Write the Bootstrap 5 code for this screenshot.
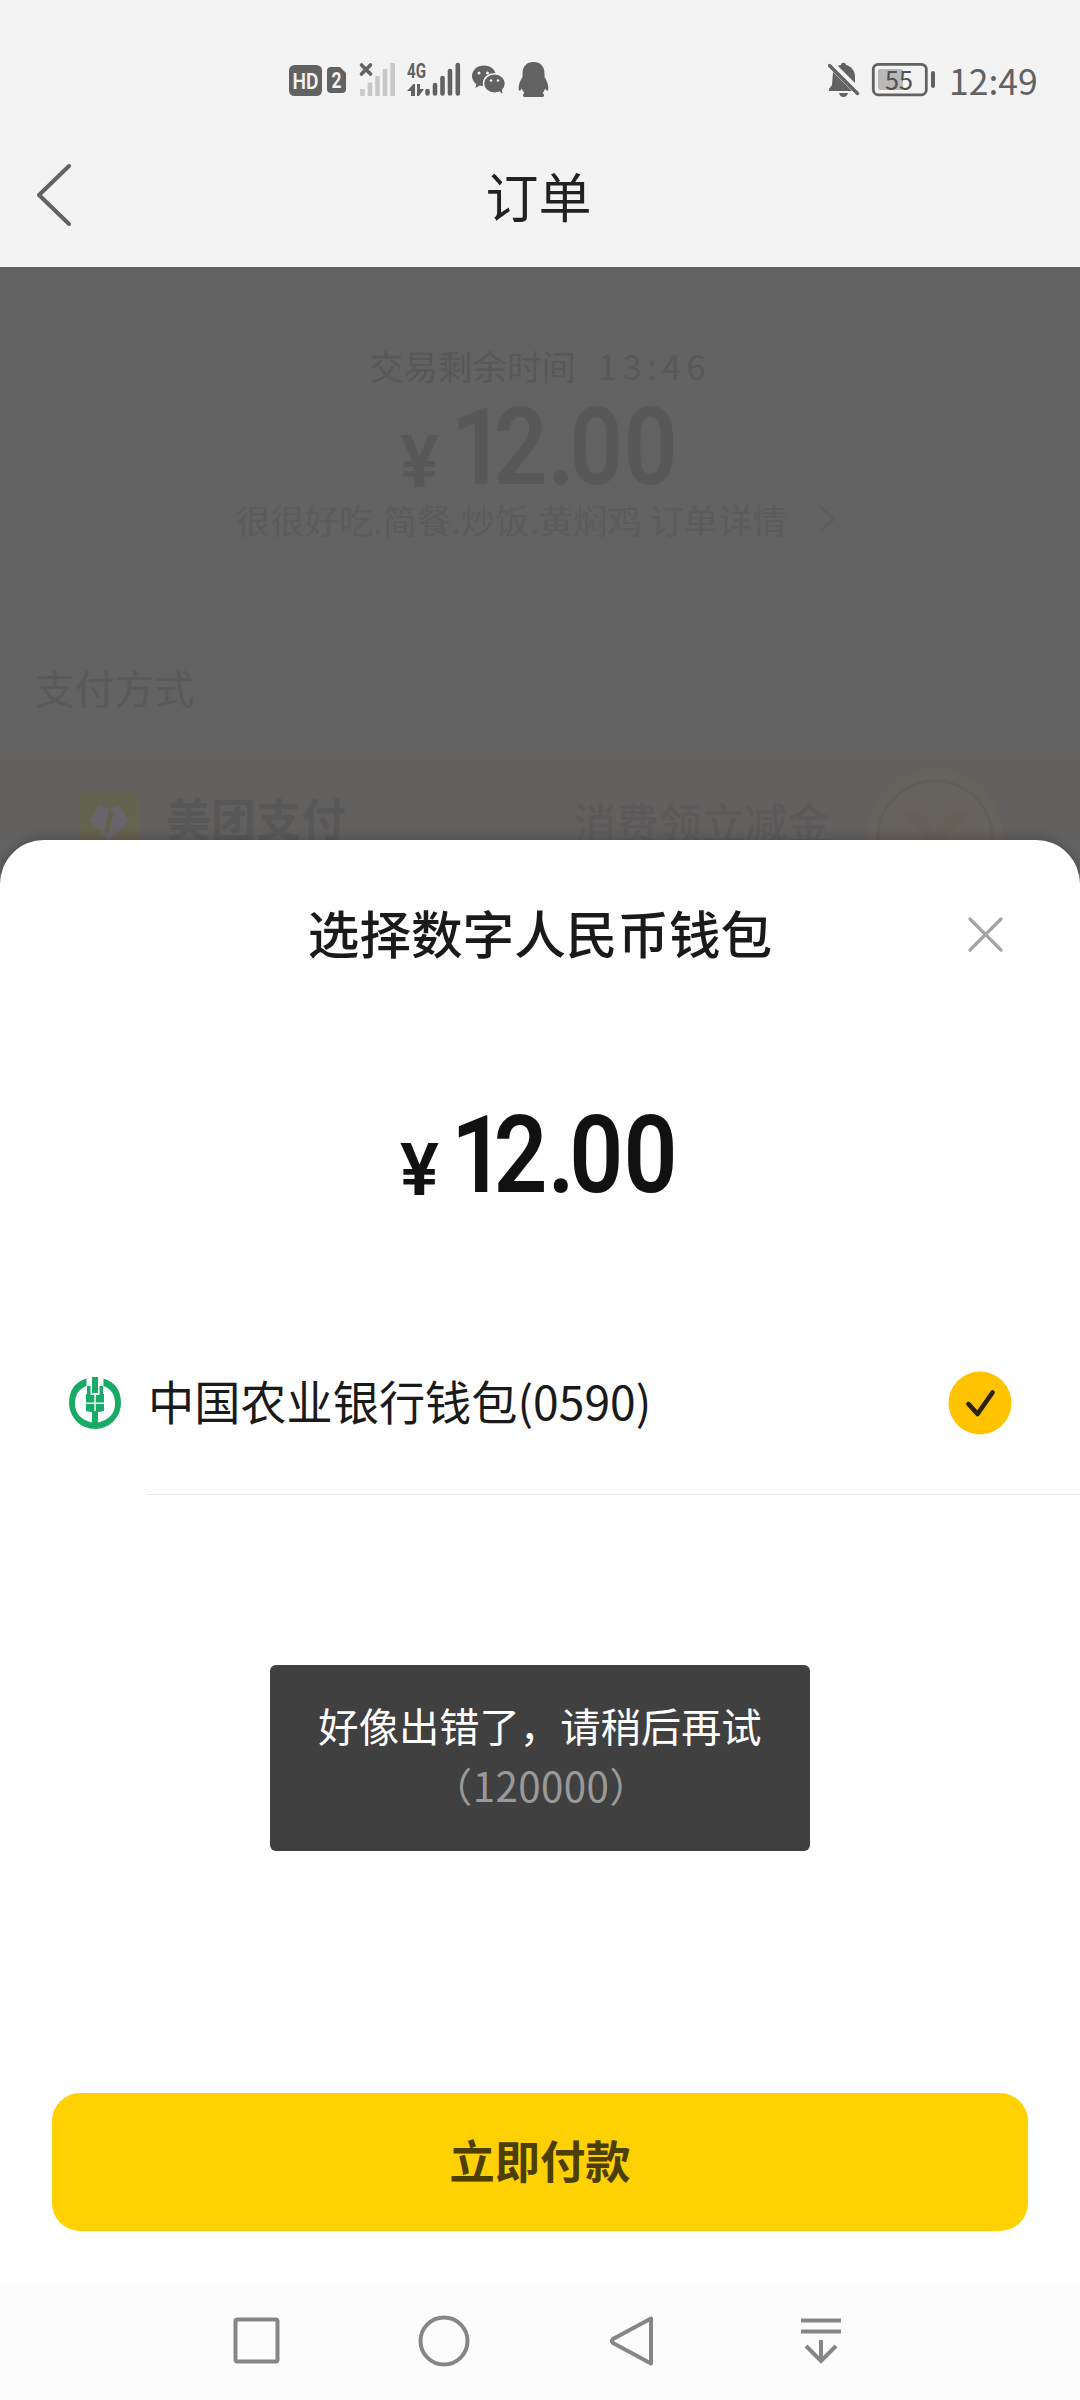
<!DOCTYPE html>
<html lang="zh-CN">
<head>
<meta charset="utf-8">
<meta name="viewport" content="width=device-width, initial-scale=1">
<title>订单</title>
<link href="https://cdn.jsdelivr.net/npm/bootstrap@5.3.0/dist/css/bootstrap.min.css" rel="stylesheet">
<style>
body{font-family:"Noto Sans CJK SC",sans-serif;background:#626262;color:#1a1a1a}
.screen{width:1080px;height:2400px;overflow:hidden}
.topbar{background:#f3f3f3;height:267px;flex:none}
.status{height:160px;padding:0 43px 0 289px}
.clock{font-size:35.5px;line-height:40px;color:#626262;width:88px;white-space:nowrap;margin-left:13px}
.titlebar{height:70px;padding-left:37px;padding-right:74px}
.titlebar h1{font-size:53px;line-height:68px;font-weight:400;color:#222}
.dimmed{height:573px;flex:none;background:linear-gradient(180deg,#626262 80%,#62605e 92%);color:#585858;padding-top:78px;overflow:hidden}
.timeline{font-size:34.5px;line-height:40px}
.timeline span{letter-spacing:5.4px;margin-left:22px}
.money{width:280px;height:84px;line-height:86px;font-family:Roboto,sans-serif;font-weight:600;margin-left:auto;margin-right:auto}
.money .yen{font-size:73px;width:51px;flex:none;padding-top:14px;height:84px}
.money .num{font-size:107px;transform:scaleX(.885);transform-origin:0 50%;white-space:nowrap}
.money .lead-digit{letter-spacing:-13px}
.money .dot{letter-spacing:-6px}
.orderline{font-size:34.3px;line-height:40px;margin-top:10px;padding-left:236px;color:#5b5b5b;white-space:pre}
.methods{font-size:39.8px;line-height:44px;margin-top:126px;padding-left:35px;color:#595959}
.payrow{height:60px;margin-top:83px;padding-left:79px}
.payrow b{font-size:45px;line-height:50px;margin-left:26px;margin-bottom:8px}
.payrow .promo{font-size:42.9px;line-height:46px;margin-left:227px;margin-bottom:3px;color:#5b5959;font-weight:500;white-space:nowrap}
.sheet{background:#fff;border-radius:44px 44px 0 0;padding-top:61px;box-shadow:0 0 12px rgba(0,0,0,.25)}
.under{background:#626262}
.sheethead{height:60px}
.sheethead h2{font-size:51.6px;line-height:60px;font-weight:500;padding-top:1px}
.closer{right:74px;top:13px}
.wallet{height:64px;margin-top:174px;padding:0 68px 0 69px}
.wallet .name{font-size:46.2px;line-height:56px;margin:-7px 0 0 27px}
.divide{height:1px;background:#e8e8e8;margin:59px 0 0 147px}
.toastbox{left:270px;top:1665px;width:540px;height:186px;border-radius:6px;background:#404040;color:#fff;font-size:40.3px;line-height:60px;padding-top:30px}
.toastbox .code{color:#999;letter-spacing:.4px;padding-left:2px}
.paybtn{--bs-btn-bg:#ffd103;--bs-btn-color:#4d3f00;background:#ffd103;color:#4d3f00;border:0;border-radius:28px;height:138px;margin:0 52px 52px;font-size:45.3px;font-weight:700;padding:0 0 5px}
.navkeys{height:117px;background:#fcfcfc}
</style>
<script src="https://cdn.jsdelivr.net/npm/bootstrap@5.3.0/dist/js/bootstrap.bundle.min.js"></script>
</head>
<body>
<div class="screen d-flex flex-column position-relative">
  <header class="topbar">
    <div class="status d-flex align-items-center justify-content-between">
      <svg width="262" height="40" viewBox="289 60 262 40" fill="#626262">
        <rect x="289" y="65" width="33" height="31" rx="5.5"/>
        <text x="305.500" y="88.500" font-family="Roboto" font-weight="600" font-size="22" text-anchor="middle" textLength="26" lengthAdjust="spacingAndGlyphs" fill="#f3f3f3">HD</text>
        <path d="M331 67h9l6 6v16q0 4-4 4h-11q-4 0-4-4V71q0-4 4-4z"/>
        <text x="336.500" y="88" font-family="Roboto" font-weight="700" font-size="22" text-anchor="middle" textLength="10" lengthAdjust="spacingAndGlyphs" fill="#f3f3f3">2</text>
        <path d="M361.500 65l9 9m0-9l-9 9" stroke="#626262" stroke-width="3.600" stroke-linecap="round"/>
        <g stroke="#c8c8c8" stroke-width="4.600"><path d="M362.500 89v7M370 82.500V96M377.500 76V96M385 69V96M392.700 63V96"/></g>
        <text x="407" y="77.500" font-family="Roboto" font-weight="700" font-size="20" textLength="19" lengthAdjust="spacingAndGlyphs">4G</text>
        <path d="M407 91l6.500-7H415v12h-4v-5zM417 84h3v5h4l-5 7h-2z"/>
        <g stroke="#626262" stroke-width="4.600" stroke-linecap="round"><path d="M427.500 91v2.500M435 85v8.500M442.500 78v15.500M450 71v22.500M457.800 65v28.500"/></g>
        <path d="M484 65.500c-7 0-12 4.700-12 10.500 0 3.400 1.700 6 4.300 8l-1 4 4.500-2.400q2 .6 4.200.6c7 0 12-4.500 12-10.200s-5-10.500-12-10.500z"/>
        <ellipse cx="494.500" cy="83.500" rx="11" ry="9.700" stroke="#f3f3f3" stroke-width="1.500"/><path d="M498 90l4.500 4-.8-6z"/>
        <g fill="#f3f3f3"><circle cx="479" cy="73" r="1.500"/><circle cx="487.500" cy="73" r="1.500"/><circle cx="491" cy="80.500" r="1.300"/><circle cx="498" cy="80.500" r="1.300"/></g>
        <path d="M533.500 62c-7 0-11 4.500-11 11.500v3.500c-3 4.500-4.500 10-3.500 13.500 1 .6 2-.5 3-2 .5 2 1.500 3.500 2.500 4.500-2 1-2 4 0 4h18c2 0 2-3 0-4 1-1 2-2.500 2.500-4.500 1 1.500 2 2.600 3 2 1-3.500-.5-9-3.500-13.500v-3.500c0-7-4-11.500-11-11.500z"/>
      </svg>
      <div class="d-flex align-items-center">
        <svg width="108" height="40" viewBox="828 60 108 40" fill="#626262">
          <path d="M833 72l19 19h-23v-2l3-4zM838 66c1-1 2-1 3-1 0-3 5-3 5 0 5 1 9 6 9 11v7zM839 93h9q-1 4-4.500 4t-4.500-4z"/>
          <path d="M829.500 65.500L857.500 93.500" stroke="#626262" stroke-width="3.400" stroke-linecap="round"/>
          <rect x="873.300" y="64.300" width="53" height="30.500" rx="5" fill="none" stroke="#626262" stroke-width="2.800"/>
          <rect x="878" y="69" width="25" height="21" rx="2" fill="#b9b9b9"/>
          <rect x="931" y="71" width="4" height="17" rx="2"/>
          <text x="899" y="89.500" font-family="Noto Sans CJK SC" font-size="26" text-anchor="middle" textLength="28" lengthAdjust="spacingAndGlyphs" fill="#505050">55</text>
        </svg>
        <span class="clock">12:49</span>
      </div>
    </div>
    <div class="titlebar d-flex align-items-center justify-content-between">
      <svg width="34" height="62" viewBox="0 0 34 62" fill="none" stroke="#626262" stroke-width="4" stroke-linecap="round" stroke-linejoin="round"><path d="M32 2L2 31L32 60"/></svg>
      <h1 class="m-0">订单</h1><span></span>
    </div>
  </header>

  <section class="dimmed">
    <div class="timeline text-center">交易剩余时间<span>13:46</span></div>
    <div class="money d-flex" style="margin-top:20px"><span class="yen">¥</span><span class="num"><span class="lead-digit">1</span>2<span class="dot">.</span>00</span></div>
    <div class="orderline d-flex align-items-center"><span>很很好吃.简餐.炒饭.黄焖鸡 订单详情</span><svg class="ms-4" width="28" height="26" viewBox="0 0 28 26" fill="none" stroke="#5b5b5b" stroke-width="2"><path d="M9 1l14 12L9 25"/></svg></div>
    <div class="methods">支付方式</div>
    <div class="payrow d-flex align-items-center">
      <svg width="61" height="60" viewBox="0 0 61 60"><rect width="61" height="60" rx="8" fill="#64634f"/><path d="M10 28L21 13q9 7 18 0l11 15-20 21z" fill="#67656a"/><path d="M30 18l5 2-5 20h-5z" fill="#62614e"/></svg>
      <b>美团支付</b><span class="promo">消费领立减金</span>
      <svg class="flex-shrink-0" style="margin-left:32px" width="146" height="112" viewBox="0 0 146 112"><circle cx="73" cy="70" r="68" fill="#64625a"/><circle cx="73" cy="72" r="57" fill="#64625a" stroke="#5f5d56" stroke-width="2.500"/><path d="M40 46h17l16 18 16-18h17L80 76v34H66V76z" fill="#655f58"/></svg>
    </div>
  </section>

  <div class="under d-flex flex-column flex-grow-1">
  <main class="sheet d-flex flex-column flex-grow-1 position-relative">
    <div class="sheethead text-center position-relative">
      <h2 class="mb-0">选择数字人民币钱包</h2>
      <svg class="closer position-absolute" width="40" height="40" viewBox="0 0 40 40" stroke="#a5a5a5" stroke-width="3.200" stroke-linecap="round"><path d="M4 5L35 36M35 5L4 36"/></svg>
    </div>
    <div class="money d-flex" style="margin-top:152px;color:#111"><span class="yen">¥</span><span class="num"><span class="lead-digit">1</span>2<span class="dot">.</span>00</span></div>
    <div class="wallet d-flex align-items-center">
      <svg width="52" height="52" viewBox="0 0 52 52" fill="#18ab68">
        <path d="M17.500 1.500Q0 7 0 26a26 26 0 0 0 52 0Q52 7 34.500 1.500V9Q46 13 46 27q0 14-17 18.500V34h-6v11.500Q6 41 6 27 6 13 17.500 9z"/>
        <path d="M23 0h6v16h-6zM18 9h3.500v9h3.800v7.500H17V17h1zM34 9h-3.500v9h-3.800v7.500H35V17h-1zM17 27h8.300v8H22l-5-1zM35 27h-8.300v8H30l5-1z"/>
      </svg>
      <span class="name">中国农业银行钱包(0590)</span>
      <svg class="ms-auto" width="64" height="64" viewBox="0 0 64 64"><circle cx="32" cy="32" r="31.500" fill="#ffc300"/><path d="M20.500 33L29.500 43L44.500 21.500" fill="none" stroke="#2b2210" stroke-width="4.700" stroke-linecap="round" stroke-linejoin="round"/></svg>
    </div>
    <div class="divide"></div>
    <button class="btn paybtn mt-auto" type="button">立即付款</button>
    <nav class="navkeys">
      <svg class="d-block" width="1080" height="116" viewBox="0 2283 1080 116" fill="none" stroke="#868686" stroke-width="4">
        <rect x="235.500" y="2319.500" width="42" height="42" rx="2"/>
        <circle cx="444" cy="2341" r="23.500"/>
        <path d="M651 2318.500V2363.500L613 2343Q610.500 2341 613 2339z" stroke-linejoin="round"/>
        <path d="M801 2320.500h40M801 2331.500h40M821 2340v21M806 2346l15 15 15-15"/>
      </svg>
    </nav>
  </main>
  </div>

  <div class="toastbox position-absolute text-center" role="alert">
    <div>好像出错了，请稍后再试</div>
    <div class="code">（120000）</div>
  </div>
</div>
</body>
</html>
